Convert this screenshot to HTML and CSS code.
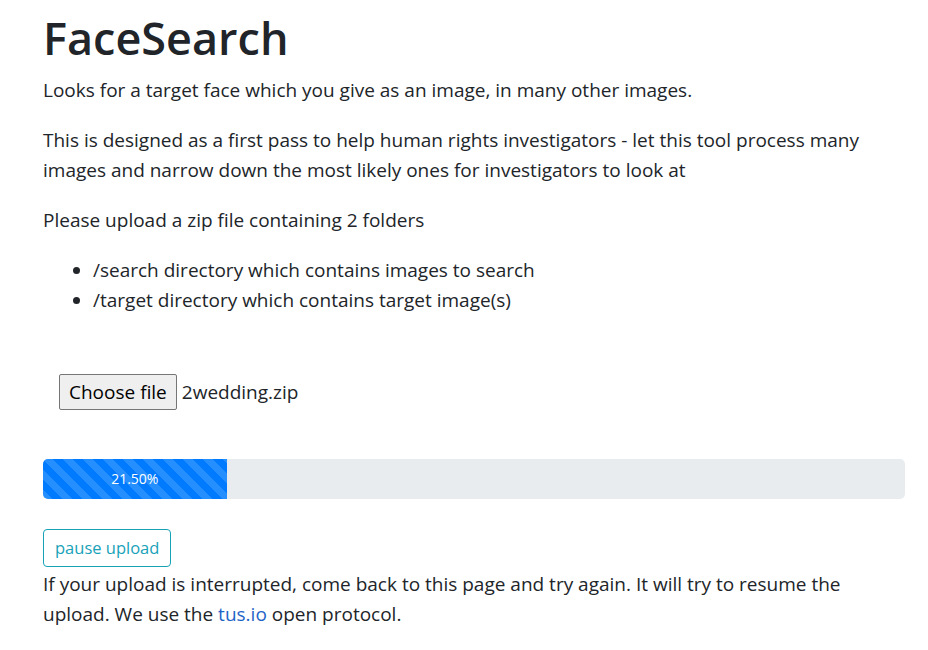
FILE: index.html
```html
<!DOCTYPE html>
<html lang="en">
<head>
<meta charset="utf-8">
<title>FaceSearch</title>
<link rel="stylesheet" href="styles.css">
</head>
<body>
<main class="container">
  <h1 class="title">FaceSearch</h1>
  <p>Looks for a target face which you give as an image, in many other images.</p>
  <p>This is designed as a first pass to help human rights investigators - let this tool process many images and narrow down the most likely ones for investigators to look at</p>
  <p>Please upload a zip file containing 2 folders</p>
  <ul class="dirs">
    <li>/search directory which contains images to search</li>
    <li>/target directory which contains target image(s)</li>
  </ul>
  <form class="upload-form">
    <label class="file-input">
      <span class="file-btn">Choose file</span>
      <span class="file-name">2wedding.zip</span>
    </label>
  </form>
  <div class="progress">
    <div class="progress-bar" style="width: 21.3%">21.50%</div>
  </div>
  <button class="btn-outline-info" type="button">pause upload</button>
  <p class="note">If your upload is interrupted, come back to this page and try again. It will try to resume the upload. We use the <a href="#">tus.io</a> open protocol.</p>
</main>
</body>
</html>
```
FILE: styles.css
```css
* { box-sizing: border-box; }
html, body { margin: 0; padding: 0; background: #fff; }
body {
  font-family: "Open Sans", "Noto Sans", sans-serif;
  font-size: 19px;
  line-height: 30px;
  color: #212529;
}
.container {
  width: 862px;
  margin-left: 43px;
  padding-top: 11px;
}
.title {
  font-size: 45px;
  font-weight: 600;
  line-height: 54px;
  margin: 0 0 10px;
}
p { margin: 0 0 20px; }
.dirs {
  margin: 0 0 20px;
  padding-left: 50px;
}
.upload-form {
  padding: 39px 0 0 16px;
  height: 124px;
}
.file-input {
  display: flex;
  align-items: center;
  gap: 5px;
}
.file-btn {
  display: inline-block;
  height: 36px;
  padding: 0 9px;
  line-height: 34px;
  background: #efefef;
  border: 1px solid #767676;
  border-radius: 2px;
  color: #000;
}
.file-name { color: #212529; }
.progress {
  height: 40px;
  background: #e9ecef;
  border-radius: 5px;
  overflow: hidden;
  display: flex;
  margin-bottom: 30px;
}
.progress-bar {
  background-color: #007bff;
  background-image: linear-gradient(45deg, rgba(255,255,255,.15) 25%, transparent 25%, transparent 50%, rgba(255,255,255,.15) 50%, rgba(255,255,255,.15) 75%, transparent 75%, transparent);
  background-size: 20px 20px;
  color: #fff;
  font-size: 14px;
  display: flex;
  align-items: center;
  justify-content: center;
}
.btn-outline-info {
  display: block;
  font-family: inherit;
  font-size: 16.5px;
  line-height: 26px;
  padding: 5px 11px;
  color: #17a2b8;
  background: transparent;
  border: 1px solid #17a2b8;
  border-radius: 4px;
  height: 38px;
  margin: 0 0 2px;
}
a { color: #1e64c8; text-decoration: none; }
```
